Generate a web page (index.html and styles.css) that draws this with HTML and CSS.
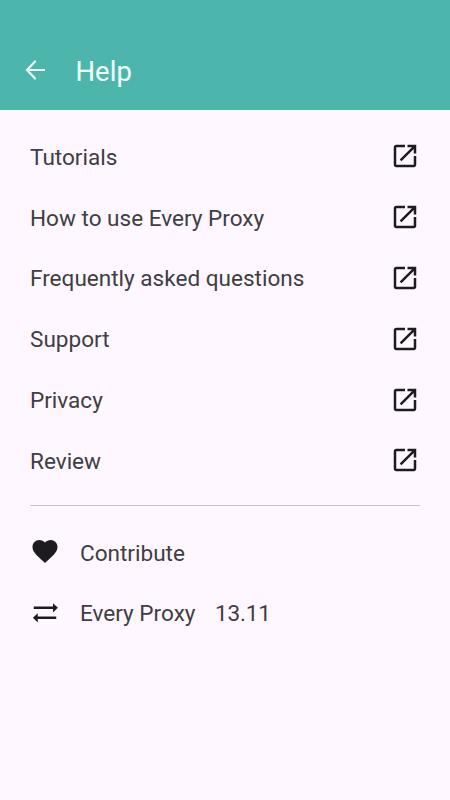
FILE: index.html
```html
<!DOCTYPE html>
<html lang="en">
<head>
<meta charset="utf-8">
<title>Help</title>
<link rel="stylesheet" href="styles.css">
</head>
<body>
<svg class="defs" aria-hidden="true">
  <symbol id="open" viewBox="0 0 24 24"><path d="M19 19H5V5h7V3H5c-1.110 0-2 .9-2 2v14c0 1.100.890 2 2 2h14c1.100 0 2-.9 2-2v-7h-2v7zM14 3v2h3.590l-9.830 9.830 1.410 1.410L19 6.410V10h2V3h-7z"/></symbol>
</svg>
<header class="bar">
  <svg class="back" viewBox="0 0 24 24"><path d="M20 11.200H7.550l5.450-5.790L12 4l-7.600 8 7.600 8 1-1.410L7.550 12.800H20z"/></svg>
  <h1 class="title">Help</h1>
</header>
<main class="content">
  <ul class="links">
    <li class="row"><span>Tutorials</span><svg class="icon"><use href="#open"/></svg></li>
    <li class="row"><span>How to use Every Proxy</span><svg class="icon"><use href="#open"/></svg></li>
    <li class="row"><span>Frequently asked questions</span><svg class="icon"><use href="#open"/></svg></li>
    <li class="row"><span>Support</span><svg class="icon"><use href="#open"/></svg></li>
    <li class="row"><span>Privacy</span><svg class="icon"><use href="#open"/></svg></li>
    <li class="row"><span>Review</span><svg class="icon"><use href="#open"/></svg></li>
  </ul>
  <ul class="about">
    <li class="row lead"><svg class="icon" viewBox="0 .6 24 24"><path d="M12 21.350l-1.450-1.320C5.400 15.360 2 12.280 2 8.500 2 5.420 4.420 3 7.500 3c1.740 0 3.410.810 4.500 2.090C13.090 3.810 14.760 3 16.500 3 19.580 3 22 5.420 22 8.500c0 3.780-3.400 6.860-8.550 11.540L12 21.350z"/></svg><span>Contribute</span></li>
    <li class="row lead"><svg class="icon" viewBox="0 .2 24 24"><path d="M22.300 8l-3.900-3.700V7H3v2h15.400v2.700zM2.300 16l3.900 3.700V17H21v-2H6.200v-2.700z"/></svg><span>Every Proxy</span><span class="version">13.11</span></li>
  </ul>
</main>
</body>
</html>
```
FILE: styles.css
```css
* { box-sizing: border-box; }
body {
  margin: 0;
  min-height: 800px;
  background: #fef7ff;
  color: #403d43;
  font-family: Roboto, sans-serif;
}
.defs { display: none; }
.bar {
  display: flex;
  align-items: center;
  height: 110px;
  padding: 32px 20px 0;
  background: #4db6ac;
  color: #f2fffd;
}
.back { width: 30px; height: 30px; margin-bottom: 2px; fill: currentColor; }
.title { margin: 1px 0 0 25.5px; font-size: 27.5px; line-height: 36px; font-weight: 400; }
.content { padding: 16px 30px 0; }
.links, .about { margin: 0; padding: 0; list-style: none; }
.row {
  display: flex;
  align-items: center;
  justify-content: space-between;
  height: 60.8px;
  font-size: 22.55px;
}
.row span { padding-top: 2px; }
.row .version { margin-left: -0.5px; letter-spacing: -0.2px; }
.icon { width: 30px; height: 30px; fill: #1d1b20; }
.links { padding-bottom: 14px; border-bottom: 1px solid #cbc6cd; }
.about { padding-top: 16px; }
.lead { justify-content: flex-start; gap: 20px; }
```
